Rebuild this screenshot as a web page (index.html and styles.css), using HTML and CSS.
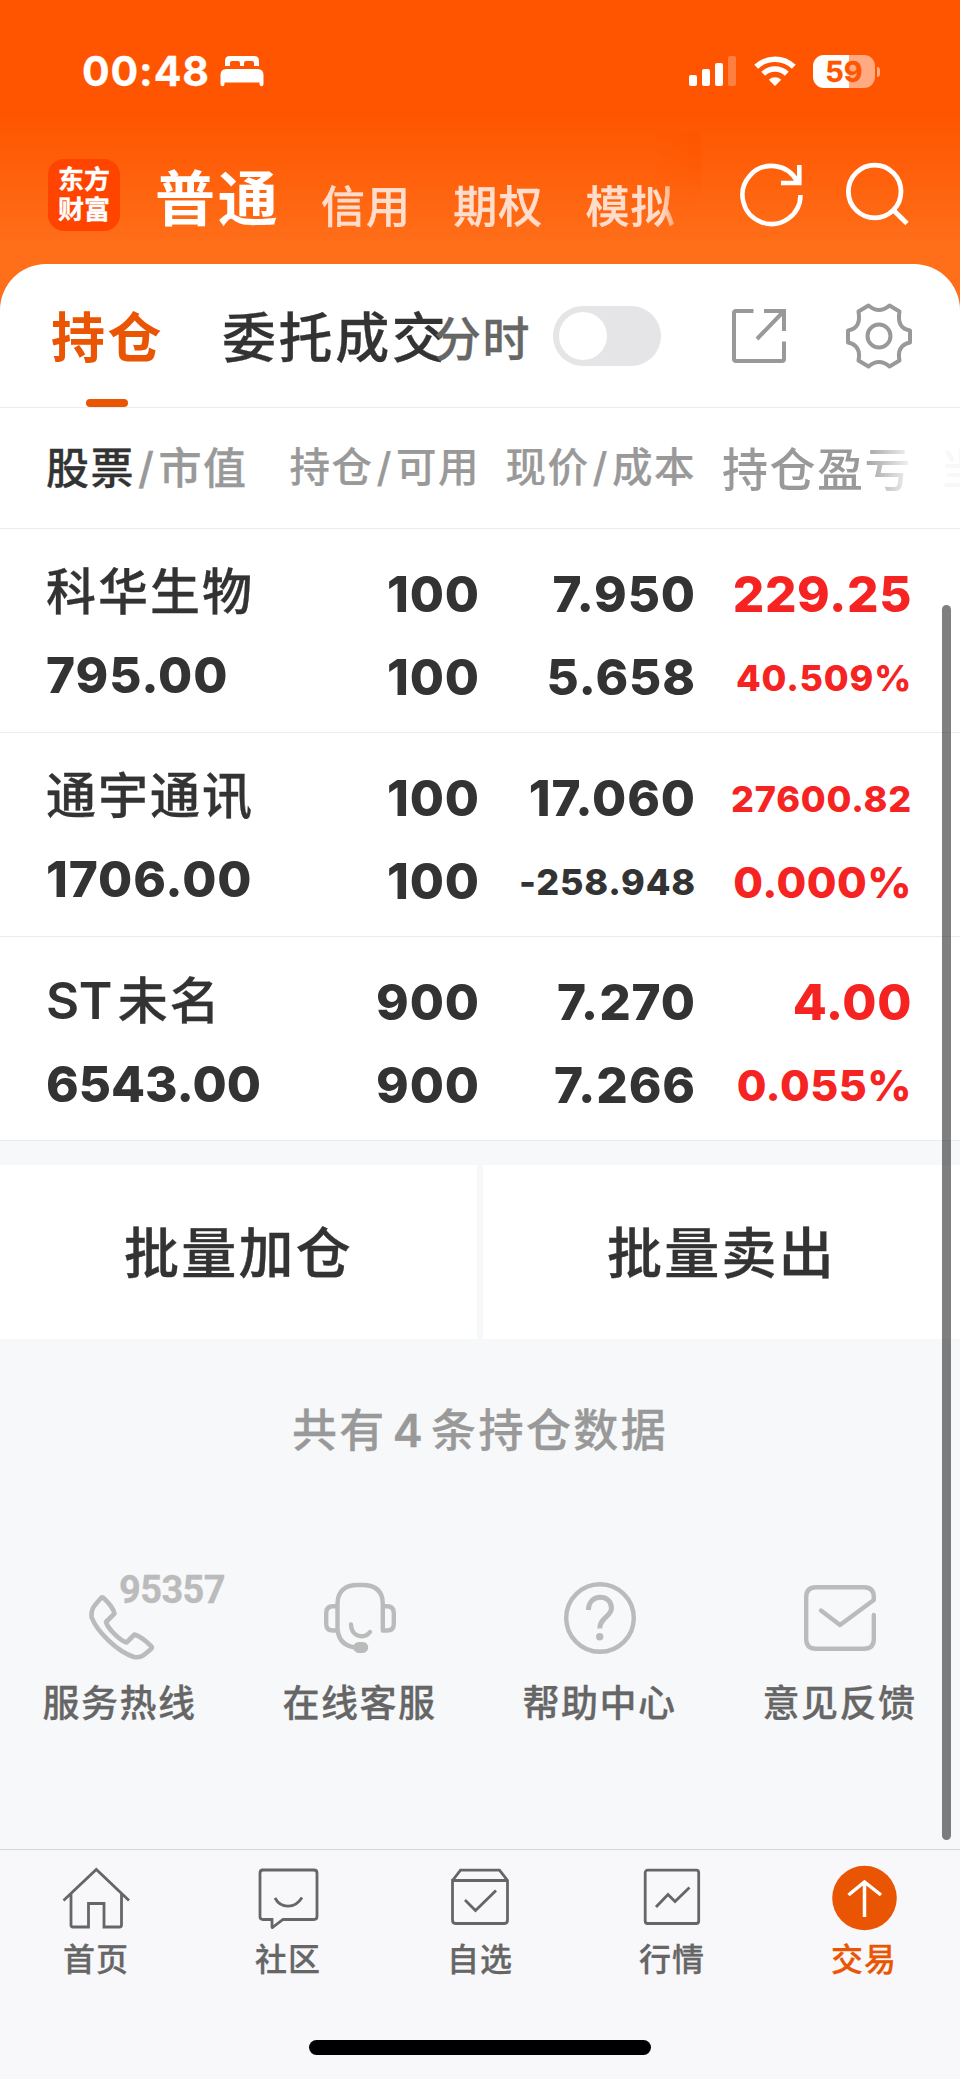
FILE: index.html
```html
<!DOCTYPE html>
<html lang="zh-CN">
<head>
<meta charset="utf-8">
<title>持仓</title>
<link rel="stylesheet" href="styles.css">
</head>
<body>
<div class="app">
  <header class="top">
    <div class="status">
      <span class="time">00:48</span>
      <svg class="bed" width="44" height="31" viewBox="0 0 44 31" fill="#fff"><path d="M5 10V5Q5 0 10 0H34Q39 0 39 5V10H34V7Q34 5 32 5H26Q24 5 24 7V10H20V7Q20 5 18 5H12Q10 5 10 7V10Z"/><path d="M0.500 19Q.5 13 6.500 13H37.500Q43.500 13 43.500 19V28Q43.500 30.200 41.500 30.200T39.500 28V26.500H4.500V28Q4.500 30.200 2.500 30.200T.5 28Z"/></svg>
      <div class="signals">
        <svg width="48" height="31" viewBox="0 0 48 31" fill="#fff"><rect y="19" width="8" height="11" rx="2"/><rect x="13" y="13" width="8" height="17" rx="2"/><rect x="26" y="7" width="8" height="23" rx="2"/><rect x="39" width="8" height="30" rx="2" opacity=".25"/></svg>
        <svg class="wifi" width="42" height="31" viewBox="0 0 42 31" fill="none" stroke="#fff" stroke-width="5.400"><path d="M2.200 10.800A27 27 0 0 1 39.800 10.800"/><path d="M9.200 17.800A17 17 0 0 1 32.800 17.800"/><path d="M21 30L14.800 23.700A9 9 0 0 1 27.200 23.700Z" fill="#fff" stroke="none"/></svg>
        <div class="battery"><span class="level">59</span><i class="cap"></i></div>
      </div>
    </div>
    <div class="nav">
      <div class="logo"><span>东方</span><span>财富</span></div>
      <div class="modes"><div class="modelist"><b>普通</b><span>信用</span><span>期权</span><span>模拟</span></div></div>
      <svg class="refresh" width="64" height="64" viewBox="0 0 64 64" fill="none" stroke="#fff" stroke-width="4.600"><path d="M60.500 32A29 29 0 1 1 57.200 18.500"/><path d="M59.300 2V20H41"/></svg>
      <svg class="search" width="64" height="64" viewBox="0 0 64 64" fill="none" stroke="#fff" stroke-width="4.800"><circle cx="28.700" cy="28.500" r="26.300"/><path d="M47.500 47.200L61 60.500"/></svg>
    </div>
  </header>

  <main class="card">
    <div class="tabs">
      <span class="tab on">持仓</span>
      <span class="tab">委托成交</span>
      <span class="minute">分时</span>
      <span class="switch"><i></i></span>
      <svg class="share" width="56" height="56" viewBox="0 0 56 56" fill="none" stroke="#999" stroke-width="4"><path d="M22.500 3H5Q3 3 3 5V51Q3 53 5 53H51Q53 53 53 51V33.500"/><path d="M33 3H53V23M52 4L26 31"/></svg>
      <svg class="gear" width="68" height="68" viewBox="0 0 68 68" fill="none" stroke="#999" stroke-width="4" stroke-linejoin="round"><path d="M23.500 3.500Q34 12.500 44.500 3.500L54.500 9.500C52.500 21 56 27 65 28.500V40.500C55.500 42.500 52.500 49 54.500 58.500L44.500 64.500Q34 55.500 23.500 64.500L13.500 58.500C15.500 49 12.500 42.500 3 40.500V28.500C12 27 15.500 21 13.500 9.500Z"/><circle cx="34" cy="34" r="11.500"/></svg>
    </div>

    <div class="row head">
      <div class="c1"><b>股票</b><i>/</i>市值</div>
      <div class="c2">持仓<i>/</i>可用</div>
      <div class="c3">现价<i>/</i>成本</div>
      <div class="c4">持仓盈亏</div>
      <div class="c5">当</div>
    </div>

    <div class="row">
      <div class="c1"><span class="name">科华生物</span><span>795.00</span></div>
      <div class="c2"><span>100</span><span>100</span></div>
      <div class="c3"><span>7.950</span><span>5.658</span></div>
      <div class="c4"><span>229.25</span><span class="sm">40.509%</span></div>
    </div>
    <div class="row">
      <div class="c1"><span class="name">通宇通讯</span><span>1706.00</span></div>
      <div class="c2"><span>100</span><span>100</span></div>
      <div class="c3"><span>17.060</span><span class="sm">-258.948</span></div>
      <div class="c4"><span class="sm">27600.82</span><span class="md">0.000%</span></div>
    </div>
    <div class="row">
      <div class="c1"><span class="name"><em>ST</em>未名</span><span class="tight">6543.00</span></div>
      <div class="c2"><span>900</span><span>900</span></div>
      <div class="c3"><span>7.270</span><span>7.266</span></div>
      <div class="c4"><span>4.00</span><span class="md">0.055%</span></div>
    </div>
  </main>

  <div class="batch"><button>批量加仓</button><button>批量卖出</button></div>
  <p class="total">共有<em>4</em>条持仓数据</p>

  <div class="services">
    <div class="service">
      <div class="pic">
        <svg width="72" height="72" viewBox="0 0 72 72" fill="none" stroke="#bbb" stroke-width="4.600" stroke-linejoin="round"><path d="M17.500 15.500C9 25 7 27 7.500 35C13 50 34 70 50 75C56 76 58 75 67 67Q69 65.500 67 64C61 58 55 54 50.500 52.500L42.500 60.500C36 58.500 24 47 22 40L30.500 31.500C29 26 24 20 19 15.500Q18 15 17.500 15.500Z"/></svg>
        <span class="hotline">95357</span>
      </div>
      <span>服务热线</span>
    </div>
    <div class="service">
      <div class="pic"><svg width="72" height="72" viewBox="0 0 72 72" fill="none" stroke="#bbb" stroke-width="4.400" stroke-linecap="round" stroke-linejoin="round"><path d="M13.500 48.500H9Q2.200 48.500 2.200 42V31Q2.200 24.300 9 24.300H13.500M13.500 47V22Q13.500 3 34 3H38Q58.800 3 58.800 22V48.500H63Q69.800 48.500 69.800 42V31Q69.800 24.300 63 24.300H59.500M13.500 47Q15 64 32 65.500M27 42.500C27.500 55 40 57.500 46 50"/><rect x="31.500" y="62.200" width="10.500" height="6.500" rx="3.200" fill="#bbb"/></svg></div>
      <span>在线客服</span>
    </div>
    <div class="service">
      <div class="pic"><svg width="72" height="72" viewBox="0 0 72 72" fill="none" stroke="#bbb" stroke-width="4.400"><circle cx="36" cy="36" r="33.800"/><path d="M24.500 28C24.500 11 47.500 11.500 47.500 26C47.500 34.500 35.700 35.500 35.700 46.500" stroke-width="5"/><circle cx="35.700" cy="54.700" r="3.700" fill="#bbb" stroke="none"/></svg></div>
      <span>帮助中心</span>
    </div>
    <div class="service">
      <div class="pic"><svg width="72" height="72" viewBox="0 0 72 72" fill="none" stroke="#bbb" stroke-width="4.400" stroke-linecap="round" stroke-linejoin="round"><path d="M17 28.500L36 43L69.800 18V15Q69.800 5.200 60 5.200H12Q2.200 5.200 2.200 15V57Q2.200 66.800 12 66.800H60Q69.800 66.800 69.800 57V33"/></svg></div>
      <span>意见反馈</span>
    </div>
  </div>

  <nav class="bar">
    <a><svg width="68" height="66" viewBox="0 0 68 66" fill="none" stroke="#666" stroke-width="2.800"><path d="M1.500 35.500L34.300 4.500L67 35.500M9 28V60Q9 62 11 62H26.500V38.500H42V62H57.500Q59.500 62 59.500 60V28"/></svg>首页</a>
    <a><svg width="68" height="66" viewBox="0 0 68 66" fill="none" stroke="#666" stroke-width="2.800"><path d="M7.500 5H60Q63 5 63 8V51.500Q63 54.500 60 54.500H29L18.500 62.500Q18 63 18 61V54.500H9Q6 54.500 6 51.500V8Q6 5 9 5"/><path d="M21 33C27 44 41 44 48 32.500"/></svg>社区</a>
    <a><svg width="68" height="66" viewBox="0 0 68 66" fill="none" stroke="#666" stroke-width="2.800"><path d="M6.500 15.500L14.500 5.200H53.500L61.500 15.500V55Q61.500 58.500 58.500 58.500H9.500Q6.500 58.500 6.500 55V15.500H61.500"/><path d="M19 35L29.500 45.500L50 25.500"/></svg>自选</a>
    <a><svg width="68" height="66" viewBox="0 0 68 66" fill="none" stroke="#666" stroke-width="2.800"><rect x="7.200" y="5.200" width="53.500" height="53.300" rx="2.500"/><path d="M18 42L30 29.500L37 36.500L51.500 22.500"/></svg>行情</a>
    <a class="on"><svg width="68" height="66" viewBox="0 0 68 66" fill="none" stroke="#fff" stroke-width="3.500"><circle cx="34.500" cy="33" r="32.300" fill="#ea5504" stroke="none"/><path d="M34.500 52V17M18.500 30L34.500 17L51 30"/></svg>交易</a>
  </nav>
  <div class="home"></div>
  <div class="scroll"></div>
</div>
</body>
</html>
```
FILE: styles.css
```css
* { box-sizing: border-box; }
body { margin: 0; font-family: Inter, "Noto Sans CJK SC", sans-serif; font-weight: 500; color: #333; -webkit-text-stroke: .3px; }
i, em { font-style: normal; }
svg { display: block; flex: none; overflow: visible; }
.app { position: relative; width: 960px; height: 2079px; overflow: hidden; background: #f7f8fa; display: flex; flex-direction: column; }

.top { height: 324px; flex: none; background: linear-gradient(#ff5500 0, #ff5500 115px, #ff6e19 245px, #ff6e19); color: #fff; }
.status { height: 132px; padding: 41px 80px 0 82px; display: flex; align-items: flex-start; }
.time { width: 138px; font-size: 41px; font-weight: 750; line-height: 61px; letter-spacing: .9px; white-space: nowrap; }
.bed { margin-top: 15px; }
.signals { display: flex; margin-left: auto; padding-top: 15px; }
.wifi { margin: 0 17px; }
.battery { display: flex; align-items: center; height: 33px; margin-top: -1px; }
.level { width: 62px; height: 33px; border-radius: 11px; background: linear-gradient(90deg, #fff 36px, #ffaa80 36px); color: #ff5500; font-size: 29px; font-weight: 750; line-height: 33px; text-align: center; }
.cap { width: 3px; height: 10px; margin: 0 0 0 2px; border-radius: 0 4px 4px 0; background: #ffaa80; }

.nav { display: flex; height: 132px; padding-left: 48px; }
.logo { width: 72px; height: 72px; margin-top: 27px; border-radius: 16px; background: #ff4400; display: flex; flex-direction: column; align-items: center; padding-top: 6px; font-size: 26px; font-weight: 700; line-height: 30px; }
.modes { position: relative; width: 546px; margin-left: 35px; }
.modelist { display: flex; white-space: nowrap; -webkit-mask: linear-gradient(90deg, #000 506px, transparent 535px); mask: linear-gradient(90deg, #000 506px, transparent 535px); }
.modes b { flex: none; width: 166px; font-size: 60px; font-weight: 700; letter-spacing: 2.8px; line-height: 134px; -webkit-text-stroke: 0; }
.modes span { flex: none; width: 132.300px; font-size: 44px; letter-spacing: 1px; line-height: 151px; color: #ffddcc; }
.modes span:last-child { width: 115px; }
.modes::after { content: ""; position: absolute; right: 0; top: 0; width: 44px; height: 70px; background: linear-gradient(90deg, transparent, rgba(255,85,0,.8)); -webkit-mask: linear-gradient(#000, transparent); mask: linear-gradient(#000, transparent); }
.refresh { margin: 31px 0 0 39px; }
.search { margin: 31px 0 0 42px; }

.card { height: 877px; margin-top: -60px; flex: none; background: #fff; border-radius: 46px 46px 0 0; }
.tabs { height: 144px; border-bottom: 1px solid #ececec; display: flex; padding-left: 51px; }
.tab { position: relative; width: 171px; font-size: 54px; letter-spacing: 2.600px; line-height: 149px; white-space: nowrap; }
.tab.on { color: #ea5504; font-weight: 700; -webkit-text-stroke: 0; }
.tab.on::after { content: ""; position: absolute; left: 35px; bottom: 0; width: 42px; height: 8px; border-radius: 4px; background: #ea5504; }
.minute { position: relative; margin-left: 41px; width: 119px; font-size: 47px; letter-spacing: 1.500px; line-height: 149px; color: #666; white-space: nowrap; }
.switch { width: 108px; height: 60px; margin-top: 42px; padding: 6px; border-radius: 30px; background: #e5e5e7; flex: none; }
.switch i { display: block; width: 48px; height: 48px; border-radius: 50%; background: #fff; }
.share { margin: 44px 0 0 70px; }
.gear { margin: 38px 0 0 58px; }

.row { height: 204px; border-bottom: 1px solid #ececec; padding-left: 46px; display: grid; grid-template-columns: 225px 208px 216px 216px 49px; font-size: 49.500px; font-weight: 800; letter-spacing: .9px; line-height: 83px; white-space: nowrap; text-align: right; -webkit-text-stroke: 0; }
.row > div { display: flex; flex-direction: column; padding: 24px 0 0; margin-right: -1px; }
.row .c1 { text-align: left; line-height: 82px; padding-top: 22px; }
.c1 .tight { letter-spacing: 0; }
.name { font-size: 50px; font-weight: 500; letter-spacing: 2px; line-height: 83px; -webkit-text-stroke: .3px; }
.name em { font-size: 51px; font-weight: 600; letter-spacing: -.5px; margin-right: 6px; -webkit-text-stroke: 0; }
.row .c4 { color: #f62323; letter-spacing: .6px; }
.row .sm { font-size: 36px; letter-spacing: .8px; line-height: 84px; }
.row .md { font-size: 43px; letter-spacing: .5px; }
.head { height: 121px; color: #999; font-weight: 500; }
.row.head > div { display: block; padding: 0; line-height: 120px; }
.row.head .c1 { font-size: 43px; letter-spacing: 1.500px; -webkit-text-stroke: .3px; }
.head b { color: #333; font-weight: 500; }
.head i { margin: 0 3px; }
.head .c2, .head .c3 { font-size: 40.500px; letter-spacing: 1.500px; -webkit-text-stroke: .2px; }
.row.head .c2, .row.head .c3 { line-height: 119px; }
.row.head .c4 { font-size: 46px; letter-spacing: 1.500px; line-height: 122px; color: transparent; background: linear-gradient(90deg, #999 165px, #fff 222px); -webkit-background-clip: text; background-clip: text; }
.row.head .c5 { padding-left: 29px; font-size: 43px; text-align: left; color: #f8f8f8; line-height: 122px; }

.batch { display: grid; grid-template-columns: 477px 477px; gap: 6px; height: 174px; margin-top: 24px; flex: none; }
.batch button { border: 0; padding: 2px 0 0; background: #fff; color: #333; font: 500 55px/172px Inter, "Noto Sans CJK SC", sans-serif; letter-spacing: 2.200px; -webkit-text-stroke: .4px; }
.total { margin: 62px 0 0; font-size: 45px; line-height: 60px; letter-spacing: 2.400px; text-align: center; color: #999; }
.total em { margin: 0 6px; font-weight: 600; }

.services { display: grid; grid-template-columns: repeat(4, 240px); margin-top: 121px; }
.service { display: flex; flex-direction: column; align-items: center; color: #666; font-size: 37px; letter-spacing: 1.500px; line-height: 48px; }
.service > span { margin-left: -1px; }
.pic { position: relative; width: 72px; height: 72px; margin-bottom: 26px; }
.hotline { position: absolute; left: 35px; top: -12px; font-family: Roboto, sans-serif; font-size: 38px; font-weight: 700; line-height: 40px; letter-spacing: -.6px; color: #bbb; }

.bar { height: 230px; margin-top: auto; flex: none; background: #f8f8fb; border-top: 1px solid #d5d5d8; display: grid; grid-template-columns: repeat(5, 192px); }
.bar a { display: flex; flex-direction: column; align-items: center; gap: 6px; padding-top: 15px; font-size: 32px; letter-spacing: 1px; line-height: 46px; color: #666; }
.bar .on { color: #ea5504; }
.home { position: absolute; left: 309px; bottom: 24px; width: 342px; height: 15px; border-radius: 8px; background: #000; }
.scroll { position: absolute; right: 9px; top: 605px; width: 9px; height: 1235px; border-radius: 5px; background: rgba(0,0,0,.5); }
```
